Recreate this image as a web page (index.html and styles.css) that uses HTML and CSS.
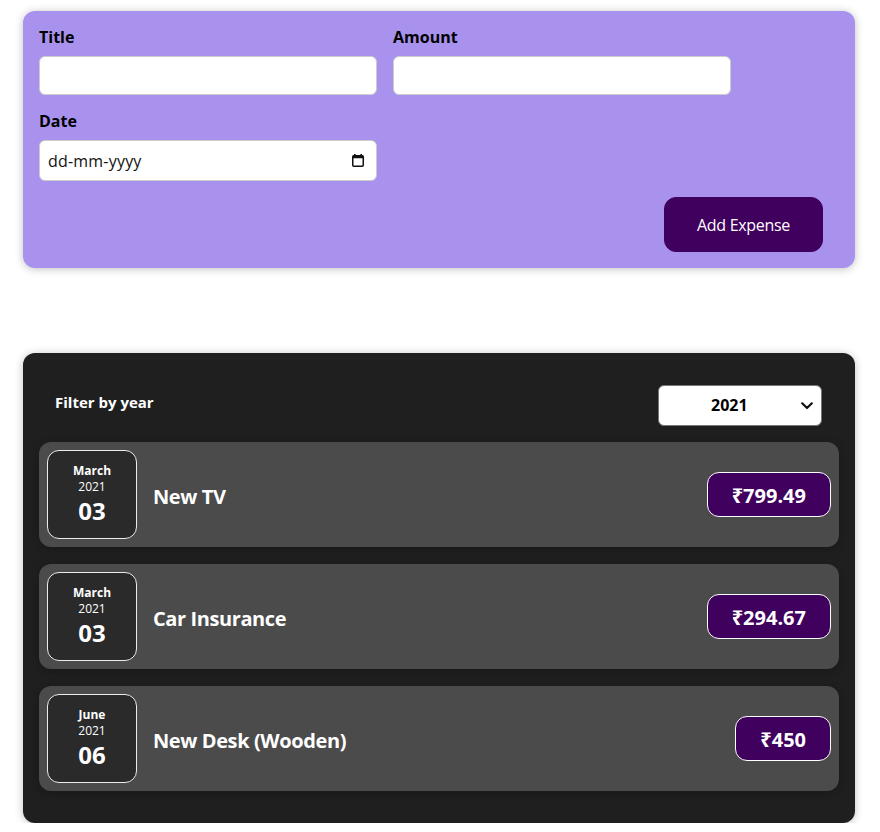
FILE: index.html
```html
<!DOCTYPE html>
<html lang="en">
<head>
<meta charset="utf-8">
<title>Expenses</title>
<link rel="stylesheet" href="styles.css">
</head>
<body>
<main class="app">
  <section class="new-expense">
    <form class="expense-form">
      <div class="controls">
        <div class="control">
          <label for="title">Title</label>
          <input id="title" class="field" type="text">
        </div>
        <div class="control">
          <label for="amount">Amount</label>
          <input id="amount" class="field" type="text">
        </div>
        <div class="control">
          <label for="date">Date</label>
          <div class="date-field">
            <input id="date" class="date-input" type="text" placeholder="dd-mm-yyyy">
            <svg class="cal-icon" width="14" height="15" viewBox="0 0 14 15" aria-hidden="true">
              <rect x="1.75" y="2.75" width="10.5" height="10.5" rx="1" fill="none" stroke="#111" stroke-width="1.5"/>
              <rect x="1.75" y="2.75" width="10.5" height="2.5" fill="#111"/>
              <rect x="3" y="1" width="1.6" height="2.5" fill="#111"/>
              <rect x="9.4" y="1" width="1.6" height="2.5" fill="#111"/>
            </svg>
          </div>
        </div>
      </div>
      <div class="actions">
        <button type="button" class="add-btn">Add Expense</button>
      </div>
    </form>
  </section>

  <section class="expenses">
    <div class="filter">
      <label class="filter-label" for="year">Filter by year</label>
      <div class="select-wrap">
        <select id="year" class="filter-select">
          <option>2022</option>
          <option selected>2021</option>
          <option>2020</option>
          <option>2019</option>
        </select>
        <svg class="chevron" width="12" height="8" viewBox="0 0 12 8" aria-hidden="true">
          <path d="M1.2 1.3 L6 6 L10.8 1.3" fill="none" stroke="#111" stroke-width="2.2" stroke-linecap="round" stroke-linejoin="round"/>
        </svg>
      </div>
    </div>
    <ul class="expense-list">
      <li class="expense-item">
        <div class="expense-date">
          <div class="month">March</div>
          <div class="year">2021</div>
          <div class="day">03</div>
        </div>
        <div class="description">
          <h2 class="item-title">New TV</h2>
          <div class="price">₹799.49</div>
        </div>
      </li>
      <li class="expense-item">
        <div class="expense-date">
          <div class="month">March</div>
          <div class="year">2021</div>
          <div class="day">03</div>
        </div>
        <div class="description">
          <h2 class="item-title">Car Insurance</h2>
          <div class="price">₹294.67</div>
        </div>
      </li>
      <li class="expense-item">
        <div class="expense-date">
          <div class="month">June</div>
          <div class="year">2021</div>
          <div class="day">06</div>
        </div>
        <div class="description">
          <h2 class="item-title">New Desk (Wooden)</h2>
          <div class="price">₹450</div>
        </div>
      </li>
    </ul>
  </section>
</main>
</body>
</html>
```

FILE: styles.css
```css
html, body {
  margin: 0;
  padding: 0;
  background: #ffffff;
  font-family: "Open Sans", "Noto Sans", sans-serif;
  font-size: 16px;
}

.app {
  display: flex;
  flex-direction: column;
  align-items: center;
  gap: 85px;
  padding: 11px 2px 0 0;
}

.new-expense {
  width: 800px;
  padding: 16px;
  background-color: #a892ee;
  border-radius: 12px;
  box-shadow: 0 1px 8px rgba(0, 0, 0, 0.25);
}

.controls {
  display: flex;
  flex-wrap: wrap;
  gap: 16px;
  margin-bottom: 16px;
}

.control label {
  display: block;
  font-weight: bold;
  margin-bottom: 8px;
  color: #000;
  line-height: 21px;
  padding-top: 1px;
  margin-top: -1px;
}

.field {
  font: inherit;
  line-height: 21px;
  padding: 8px;
  border-radius: 6px;
  border: 1px solid #ccc;
  width: 320px;
  background: #fff;
  display: block;
  outline: none;
}

.date-field {
  display: flex;
  align-items: center;
  height: 39px;
  padding: 0 11px 0 8px;
  width: 317px;
  border: 1px solid #ccc;
  border-radius: 6px;
  background: #fff;
}

.date-input {
  flex: 1;
  min-width: 0;
  font: inherit;
  letter-spacing: 0.2px;
  border: none;
  padding: 0;
  outline: none;
  background: transparent;
  color: #111;
}

.date-input::placeholder {
  color: #111;
  opacity: 1;
}

.cal-icon {
  display: block;
  flex: none;
}

.actions {
  display: flex;
  justify-content: flex-end;
}

.add-btn {
  font: inherit;
  line-height: 21px;
  letter-spacing: -0.3px;
  padding: 17px 32px 15px;
  border: 1px solid #40005d;
  background-color: #40005d;
  color: #fff;
  border-radius: 12px;
  margin-right: 16px;
}

.expenses {
  width: 800px;
  padding: 16px;
  background-color: #1f1f1f;
  border-radius: 12px;
  box-shadow: 0 1px 8px rgba(0, 0, 0, 0.25);
}

.filter {
  display: flex;
  align-items: center;
  justify-content: space-between;
  padding: 0 16px;
  margin-top: 16px;
  color: #fff;
}

.filter-label {
  font-weight: bold;
  font-size: 15px;
  margin-bottom: 8px;
}

.select-wrap {
  position: relative;
  margin-right: 1px;
}

.filter-select {
  display: block;
  appearance: none;
  -webkit-appearance: none;
  box-sizing: border-box;
  width: 164px;
  height: 41px;
  font: inherit;
  font-weight: bold;
  line-height: 21px;
  padding: 0 0 0 52px;
  border-radius: 6px;
  border: 1px solid #767676;
  background: #fff;
  color: #000;
  outline: none;
}

.chevron {
  position: absolute;
  right: 9px;
  top: 17px;
  pointer-events: none;
}

.expense-list {
  list-style: none;
  margin: 16px 0;
  padding: 0;
  display: flex;
  flex-direction: column;
  gap: 17px;
}

.expense-item {
  display: flex;
  align-items: center;
  padding: 8px;
  border-radius: 12px;
  background-color: #4b4b4b;
  box-shadow: 0 2px 8px rgba(0, 0, 0, 0.25);
}

.expense-date {
  display: flex;
  flex-direction: column;
  align-items: center;
  justify-content: center;
  width: 88px;
  height: 87px;
  border: 1px solid #ececec;
  background-color: #2a2a2a;
  color: #fff;
  border-radius: 12px;
}

.month {
  font-size: 12px;
  font-weight: bold;
  line-height: 16px;
}

.year {
  font-size: 12px;
  line-height: 16px;
}

.day {
  font-size: 24px;
  font-weight: bold;
  line-height: 32px;
}

.description {
  flex: 1;
  display: flex;
  align-items: center;
  justify-content: flex-start;
}

.item-title {
  flex: 1;
  margin: 0 16px;
  padding-top: 3px;
  font-size: 20px;
  letter-spacing: -0.4px;
  color: #fff;
}

.price {
  font-size: 20px;
  font-weight: bold;
  line-height: 27px;
  color: #fff;
  background-color: #40005d;
  border: 1px solid #fff;
  padding: 9px 24px 7px;
  border-radius: 12px;
}
```
